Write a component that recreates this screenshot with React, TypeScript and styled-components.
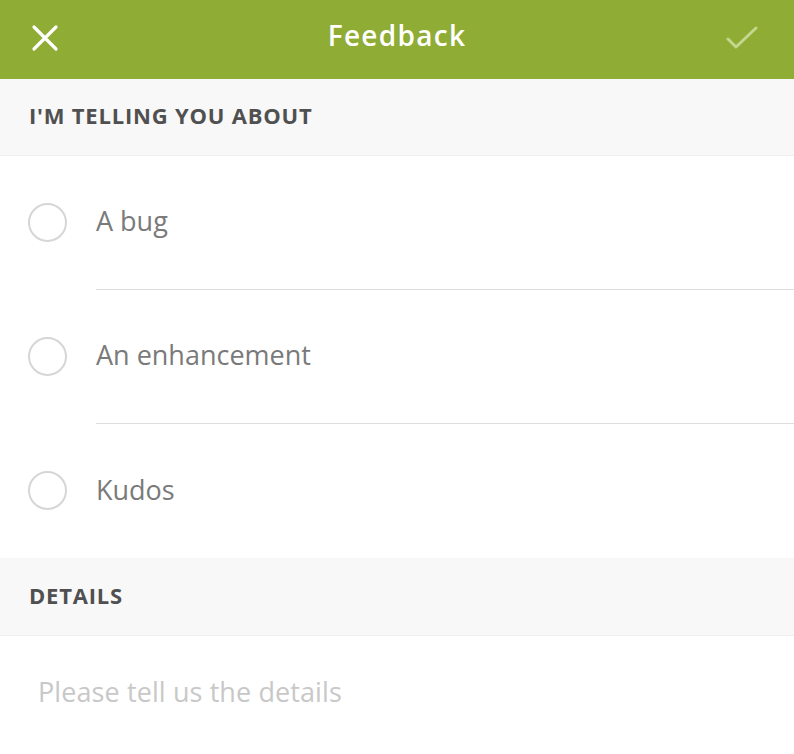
import React, { useState } from "react";
import styled, { createGlobalStyle } from "styled-components";

const Global = createGlobalStyle`
  html, body { margin: 0; padding: 0; background: #ffffff; }
  body { font-family: "Open Sans", Lato, "Liberation Sans", sans-serif; -webkit-font-smoothing: antialiased; }
  * { box-sizing: border-box; }
`;

const Screen = styled.div`
  width: 794px;
  height: 754px;
  display: flex;
  flex-direction: column;
  background: #ffffff;
  overflow: hidden;
`;

const TopBar = styled.header`
  height: 79px;
  background: #8fac35;
  display: grid;
  grid-template-columns: 94px 1fr 94px;
  align-items: center;
`;

const IconButton = styled.button<{ $align: "start" | "end" }>`
  border: 0;
  background: transparent;
  padding: 0;
  height: 79px;
  display: flex;
  align-items: center;
  justify-content: ${(p) => (p.$align === "start" ? "flex-start" : "flex-end")};
  padding-left: ${(p) => (p.$align === "start" ? "31px" : "0")};
  padding-right: ${(p) => (p.$align === "end" ? "36px" : "0")};
  padding-bottom: 3px;
  cursor: pointer;
`;

const Title = styled.h1`
  margin: 0;
  text-align: center;
  color: #ffffff;
  font-size: 28px;
  font-weight: 600;
  letter-spacing: 1.3px;
  padding-bottom: 10px;
`;

const SectionHeader = styled.div`
  height: 77px;
  background: #f8f8f8;
  border-bottom: 1px solid #efefef;
  display: flex;
  align-items: center;
  padding-left: 29px;
  padding-bottom: 4px;
  color: #505050;
  font-size: 22px;
  font-weight: 700;
  text-transform: uppercase;
  letter-spacing: 0.8px;
`;

const OptionList = styled.div`
  display: flex;
  flex-direction: column;
`;

const Option = styled.label`
  height: 134px;
  display: flex;
  align-items: stretch;
  cursor: pointer;
`;

const RadioCol = styled.div`
  width: 96px;
  display: flex;
  align-items: center;
  padding-left: 28px;
`;

const Radio = styled.span<{ $checked: boolean }>`
  width: 39px;
  height: 39px;
  border-radius: 50%;
  border: 2px solid ${(p) => (p.$checked ? "#8fac35" : "#d6d6d6")};
  background: ${(p) => (p.$checked ? "radial-gradient(circle, #8fac35 0 8px, transparent 9px)" : "transparent")};
  margin-top: -2px;
`;

const OptionBody = styled.div<{ $divider: boolean }>`
  flex: 1;
  display: flex;
  align-items: center;
  border-bottom: ${(p) => (p.$divider ? "1px solid #dedede" : "none")};
  color: #7a7a7a;
  font-size: 27px;
  letter-spacing: 0;
  padding-bottom: 4px;
`;

const DetailsHeader = styled(SectionHeader)`
  height: 78px;
`;

const DetailsInput = styled.textarea`
  flex: 1;
  border: 0;
  outline: none;
  resize: none;
  padding: 37px 38px;
  font-family: inherit;
  font-size: 27px;
  letter-spacing: 0.1px;
  color: #555;
  &::placeholder { color: #c8c8c8; }
`;

const options = ["A bug", "An enhancement", "Kudos"];

export default function App() {
  const [selected, setSelected] = useState<number | null>(null);
  return (
    <Screen>
      <Global />
      <TopBar>
        <IconButton $align="start" aria-label="Close">
          <svg width="28" height="28" viewBox="0 0 28 28">
            <path d="M3 3 L25 25 M25 3 L3 25" stroke="#ffffff" strokeWidth="3.2" strokeLinecap="round" fill="none" />
          </svg>
        </IconButton>
        <Title>Feedback</Title>
        <IconButton $align="end" aria-label="Submit">
          <svg width="32" height="24" viewBox="0 0 32 24">
            <path d="M2 13 L10 21 L30 2" stroke="#c3d88c" strokeWidth="3" strokeLinecap="round" strokeLinejoin="round" fill="none" />
          </svg>
        </IconButton>
      </TopBar>
      <SectionHeader>I'm telling you about</SectionHeader>
      <OptionList>
        {options.map((o, i) => (
          <Option key={o} onClick={() => setSelected(i)}>
            <RadioCol>
              <Radio $checked={selected === i} />
            </RadioCol>
            <OptionBody $divider={i < options.length - 1}>{o}</OptionBody>
          </Option>
        ))}
      </OptionList>
      <DetailsHeader>Details</DetailsHeader>
      <DetailsInput placeholder="Please tell us the details" />
    </Screen>
  );
}
